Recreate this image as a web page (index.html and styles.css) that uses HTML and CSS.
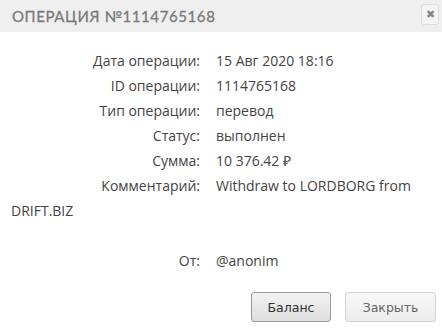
FILE: index.html
```html
<!DOCTYPE html>
<html lang="ru">
<head>
    <meta charset="UTF-8">
    <title>Операция №1114765168</title>
    <link rel="stylesheet" href="styles.css">
</head>
<body>

<div class="dialog">
    <div class="titlebar">
        <span class="title">Операция №1114765168</span>
        <button type="button" class="close" title="Закрыть">&#10006;</button>
    </div>

    <div class="content">
        <div class="row"><span class="lbl">Дата операции:</span>15 Авг 2020 18:16</div>
        <div class="row"><span class="lbl">ID операции:</span>1114765168</div>
        <div class="row"><span class="lbl">Тип операции:</span>перевод</div>
        <div class="row"><span class="lbl">Статус:</span>выполнен</div>
        <div class="row"><span class="lbl">Сумма:</span>10 376.42 &#8381;</div>
        <div class="row"><span class="lbl">Комментарий:</span>Withdraw to LORDBORG from DRIFT.BIZ</div>
        <div class="row gap"><span class="lbl">От:</span>@anonim</div>
    </div>

    <div class="buttons">
        <button type="button" class="btn">Баланс</button>
        <button type="button" class="btn light">Закрыть</button>
    </div>
</div>

</body>
</html>
```

FILE: styles.css
```css
body {
    margin: 0;
    background: #fff;
}

.dialog {
    width: 442px;
    height: 328px;
    display: flex;
    flex-direction: column;
}

.titlebar {
    height: 32px;
    background: #efefef;
    display: flex;
    align-items: center;
    justify-content: space-between;
    padding: 0 3px 0 12px;
}

.title {
    font-family: "Lato", sans-serif;
    font-size: 15px;
    text-transform: uppercase;
    letter-spacing: 0.6px;
    color: #7a7a7a;
    -webkit-text-stroke: 0.3px #7a7a7a;
}

.close {
    width: 18px;
    height: 21px;
    margin-top: -3px;
    padding: 0;
    border: 1px solid #ddd;
    border-radius: 3px;
    background: #f4f4f4;
    color: #888;
    font-size: 11px;
    line-height: 19px;
}

.content {
    padding: 16px 10px 0 11px;
    font-family: "Open Sans", sans-serif;
    font-size: 14px;
    line-height: 25px;
    color: #444;
}

.lbl {
    display: inline-block;
    width: 205px;
    padding-right: 16px;
    box-sizing: border-box;
    text-align: right;
}

.gap {
    margin-top: 25px;
}

.buttons {
    margin-top: auto;
    display: flex;
    justify-content: flex-end;
    gap: 14px;
    padding: 0 6px 6px 0;
}

.btn {
    height: 30px;
    min-width: 80px;
    padding: 0 12px;
    font-family: "DejaVu Sans", Verdana, sans-serif;
    font-size: 12.5px;
    color: #333;
    border: 1px solid #9c9c9c;
    border-radius: 3px;
    background: linear-gradient(#f2f2f2, #dedede);
}

.btn.light {
    min-width: 91px;
    color: #666;
    border-color: #d3d3d3;
    background: linear-gradient(#f8f8f8, #ececec);
}
```
